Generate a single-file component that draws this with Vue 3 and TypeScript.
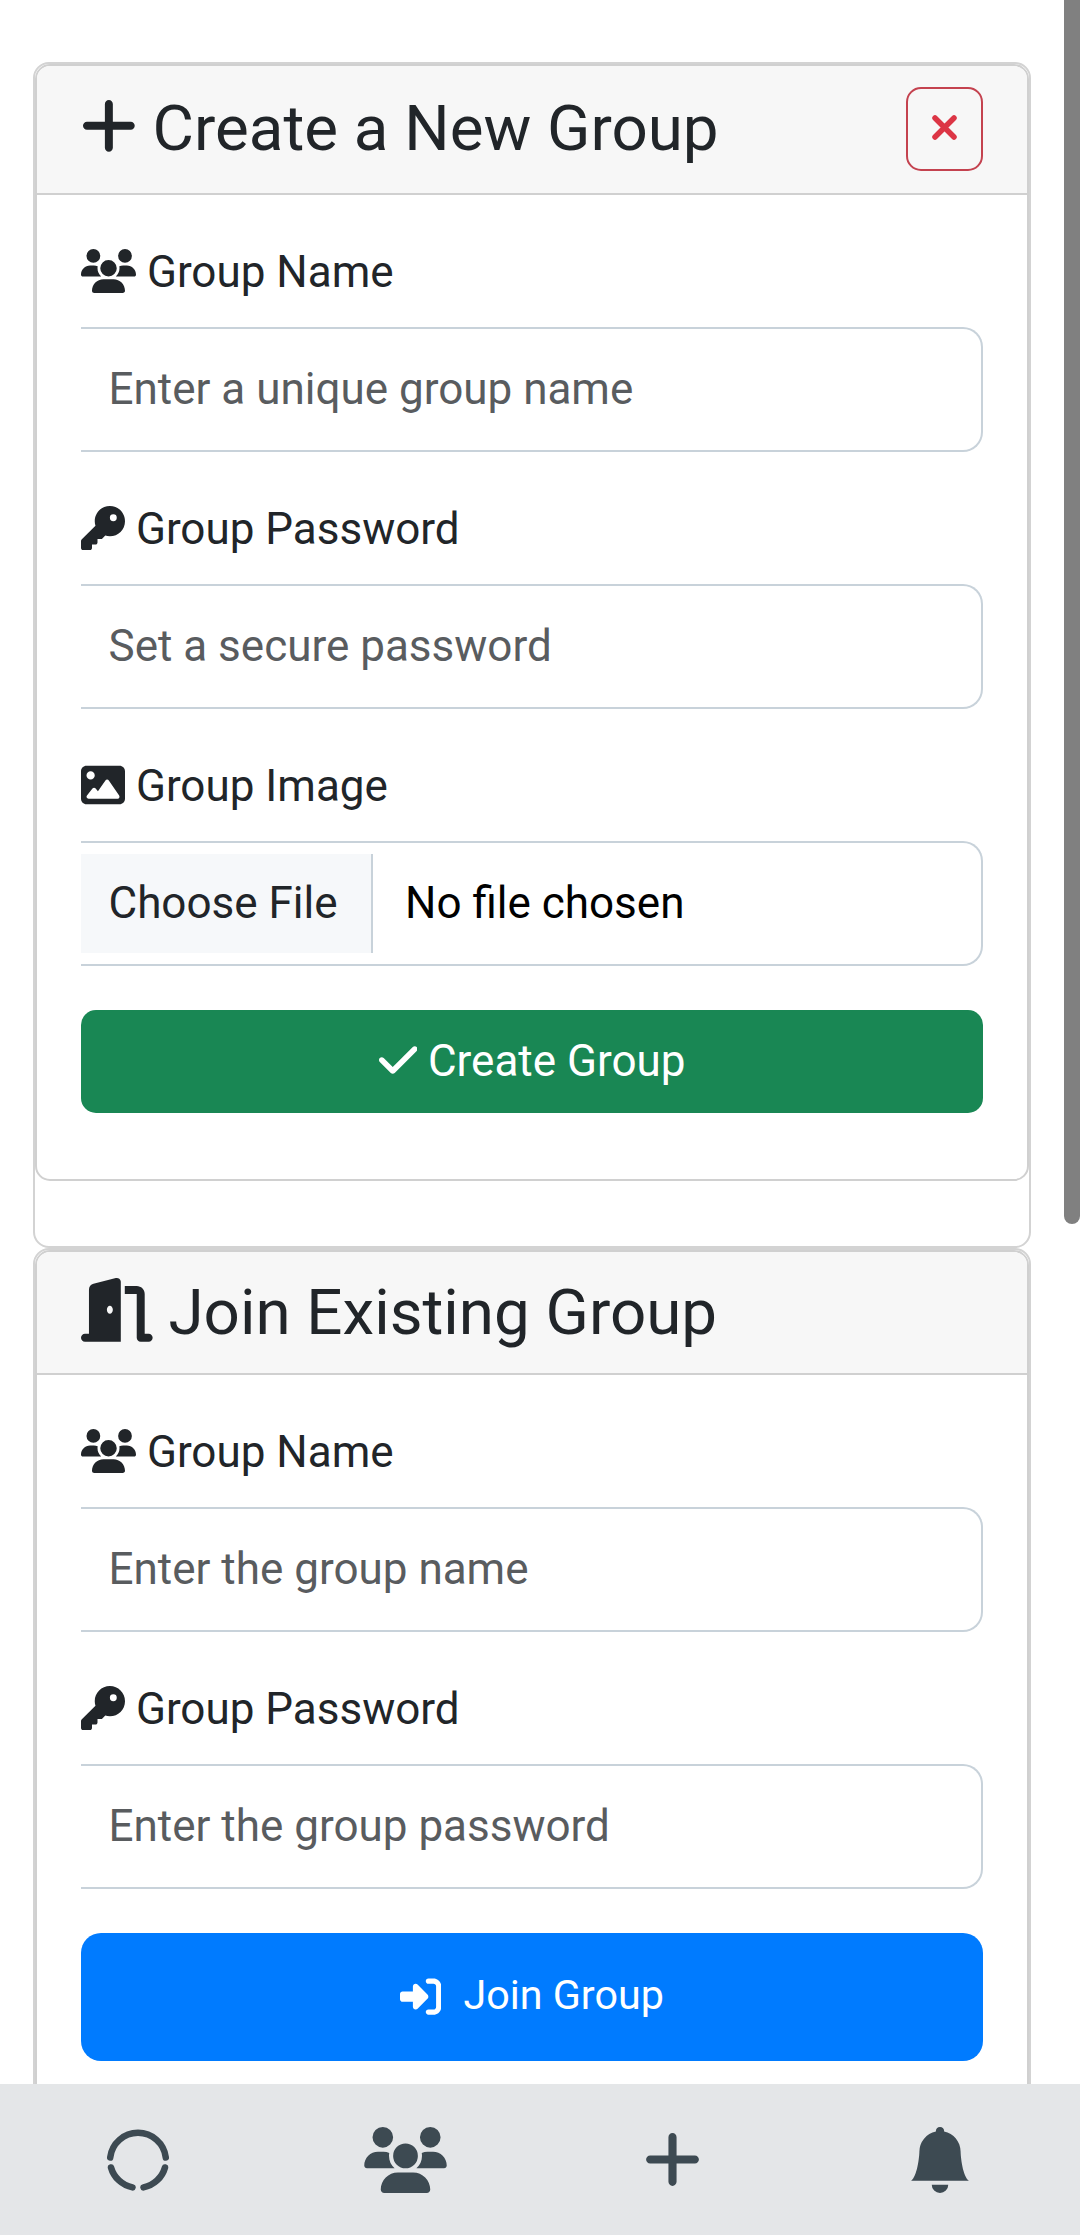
<script setup lang="ts">
const users = "M144 0a80 80 0 1 1 0 160A80 80 0 1 1 144 0zM512 0a80 80 0 1 1 0 160A80 80 0 1 1 512 0zM0 298.7C0 239.8 47.8 192 106.7 192h42.7c15.9 0 31 3.5 44.6 9.7c-1.3 7.2-1.9 14.7-1.9 22.3c0 38.2 16.8 72.5 43.3 96c-.2 0-.4 0-.7 0H21.3C9.6 320 0 310.4 0 298.7zM405.3 320c-.2 0-.4 0-.7 0c26.6-23.5 43.3-57.8 43.3-96c0-7.6-.7-15-1.9-22.3c13.6-6.3 28.7-9.7 44.6-9.7h42.7C592.2 192 640 239.8 640 298.7c0 11.8-9.6 21.3-21.3 21.3H405.3zM224 224a96 96 0 1 1 192 0 96 96 0 1 1 -192 0zM128 485.3C128 411.7 187.7 352 261.3 352H378.7C452.3 352 512 411.7 512 485.3c0 14.7-11.9 26.7-26.7 26.7H154.7c-14.7 0-26.7-11.9-26.7-26.7z"
const key = "M336 352c97.2 0 176-78.8 176-176S433.2 0 336 0S160 78.8 160 176c0 18.7 2.9 36.8 8.3 53.7L7 391c-4.5 4.5-7 10.6-7 17v80c0 13.3 10.7 24 24 24h80c13.3 0 24-10.7 24-24V448h40c13.3 0 24-10.7 24-24V384h40c6.4 0 12.5-2.5 17-7l33.3-33.3c16.9 5.4 35 8.3 53.7 8.3zM376 96a40 40 0 1 1 0 80 40 40 0 1 1 0-80z"
const image = "M0 96C0 60.7 28.7 32 64 32H448c35.3 0 64 28.7 64 64V416c0 35.3-28.7 64-64 64H64c-35.3 0-64-28.7-64-64V96zM323.8 202.5c-4.5-6.6-11.9-10.5-19.8-10.5s-15.4 3.9-19.8 10.5l-87 127.6L170.7 297c-4.6-5.7-11.5-9-18.7-9s-14.2 3.3-18.7 9l-64 80c-5.8 7.2-6.9 17.1-2.9 25.4s12.4 13.6 21.6 13.6h96 32H424c8.9 0 17.1-4.9 21.2-12.8s3.6-17.4-1.4-24.7l-120-176zM112 192a48 48 0 1 0 0-96 48 48 0 1 0 0 96z"
const check = "M438.6 105.4c12.5 12.5 12.5 32.8 0 45.3l-256 256c-12.5 12.5-32.8 12.5-45.3 0l-128-128c-12.5-12.5-12.5-32.8 0-45.3s32.8-12.5 45.3 0L160 338.7 393.4 105.4c12.5-12.5 32.8-12.5 45.3 0z"
const door = "M320 32c0-9.9-4.5-19.2-12.3-25.2S289.8-1.4 280.2 1l-179.9 45C79 51.3 64 70.5 64 92.5V448H32c-17.7 0-32 14.3-32 32s14.3 32 32 32H96 288h32V480 32zM256 256c0 17.7-10.7 32-24 32s-24-14.3-24-32s10.7-32 24-32s24 14.3 24 32zm96-128h96V480c0 17.7 14.3 32 32 32h64c17.7 0 32-14.3 32-32s-14.3-32-32-32H512V128c0-35.3-28.7-64-64-64H352v64z"
const signIn = "M217.9 105.9L340.7 228.7c7.2 7.2 11.3 17.1 11.3 27.3s-4.1 20.1-11.3 27.3L217.9 406.1c-6.4 6.4-15 9.9-24 9.9c-18.7 0-33.9-15.2-33.9-33.9l0-62.1L32 320c-17.7 0-32-14.3-32-32l0-64c0-17.7 14.3-32 32-32l128 0 0-62.1c0-18.7 15.2-33.9 33.9-33.9c9 0 17.6 3.6 24 9.9zM352 416l64 0c17.7 0 32-14.3 32-32l0-256c0-17.7-14.3-32-32-32l-64 0c-17.7 0-32-14.3-32-32s14.3-32 32-32l64 0c53 0 96 43 96 96l0 256c0 53-43 96-96 96l-64 0c-17.7 0-32-14.3-32-32s14.3-32 32-32z"
const plus = "M256 80c0-17.7-14.3-32-32-32s-32 14.3-32 32V224H48c-17.7 0-32 14.3-32 32s14.3 32 32 32H192V432c0 17.7 14.3 32 32 32s32-14.3 32-32V288H400c17.7 0 32-14.3 32-32s-14.3-32-32-32H256V80z"
const bell = "M8 16a2 2 0 0 0 2-2H6a2 2 0 0 0 2 2m.995-14.901a1 1 0 1 0-1.99 0A5 5 0 0 0 3 6c0 1.098-.5 6-2 7h14c-1.5-1-2-5.902-2-7 0-2.42-1.72-4.44-4.005-4.901"
</script>

<template>
  <div class="page">
    <section class="outer">
      <div class="inner">
        <header class="head">
          <h3 class="title raised">
            <svg class="ico w448" viewBox="0 0 448 512"><path :d="plus" /></svg> Create a New Group
          </h3>
          <button class="close" type="button" aria-label="Close">
            <svg class="close-x" viewBox="0 0 25 25"><path d="M3 3 22 22M22 3 3 22" /></svg>
          </button>
        </header>
        <form class="body body-first" @submit.prevent>
          <div class="group">
            <label class="label"><svg class="ico w640" viewBox="0 0 640 512"><path :d="users" /></svg> Group Name</label>
            <input class="field" type="text" placeholder="Enter a unique group name" />
          </div>
          <div class="group">
            <label class="label"><svg class="ico w512" viewBox="0 0 512 512"><path :d="key" /></svg> Group Password</label>
            <input class="field" type="text" placeholder="Set a secure password" />
          </div>
          <div class="group">
            <label class="label"><svg class="ico w512" viewBox="0 0 512 512"><path :d="image" /></svg> Group Image</label>
            <div class="file">
              <span class="file-btn">Choose File</span>
              <span class="file-name">No file chosen</span>
            </div>
          </div>
          <button class="btn-create" type="button">
            <svg class="ico w448" viewBox="0 0 448 512"><path :d="check" /></svg> Create Group
          </button>
        </form>
      </div>
    </section>

    <section class="outer outer-second">
      <div class="inner">
        <header class="head">
          <h3 class="title">
            <svg class="ico w576" viewBox="0 0 576 512"><path :d="door" /></svg> Join Existing Group
          </h3>
        </header>
        <form class="body" @submit.prevent>
          <div class="group">
            <label class="label"><svg class="ico w640" viewBox="0 0 640 512"><path :d="users" /></svg> Group Name</label>
            <input class="field" type="text" placeholder="Enter the group name" />
          </div>
          <div class="group">
            <label class="label"><svg class="ico w512" viewBox="0 0 512 512"><path :d="key" /></svg> Group Password</label>
            <input class="field" type="text" placeholder="Enter the group password" />
          </div>
          <button class="btn-join" type="button">
            <svg class="join-ico" viewBox="0 0 512 512"><path :d="signIn" /></svg>
            <span class="join-text">Join Group</span>
          </button>
        </form>
      </div>
    </section>

    <div class="scrollbar"></div>

    <nav class="nav">
      <a class="nav-item">
        <svg class="spin" viewBox="-31 -31 62 62">
          <path d="M-27.8 -2.5A28 28 0 0 1 27.8 -2.5M-27 7.5A28 28 0 0 0 -5.5 27.4M27 7.5A28 28 0 0 1 5.5 27.4" />
        </svg>
      </a>
      <a class="nav-item"><svg class="nav-users" viewBox="0 0 640 512"><path :d="users" /></svg></a>
      <a class="nav-item"><svg class="nav-plus" viewBox="0 0 448 512"><path :d="plus" /></svg></a>
      <a class="nav-item"><svg class="nav-bell" viewBox="0 0 16 16"><path :d="bell" /></svg></a>
    </nav>
  </div>
</template>

<style>
html, body { margin: 0; background: #fff; overflow: hidden; }
</style>

<style scoped>
.page {
  position: relative;
  width: 1080px;
  height: 2235px;
  overflow: hidden;
  box-sizing: border-box;
  padding: 62px 49px 0 33px;
  background: #fff;
  font-family: Roboto, "Liberation Sans", sans-serif;
  color: #212529;
  font-size: 44px;
  line-height: 66px;
}
svg { fill: currentColor; display: inline-block; }
.ico { height: 1em; vertical-align: -0.125em; }
.w448 { width: 0.875em; }
.w512 { width: 1em; }
.w576 { width: 1.125em; }
.w640 { width: 1.25em; }

.outer {
  border: 2px solid #d3d3d3;
  border-radius: 16px;
  padding-bottom: 65px;
}
.outer-second { padding-bottom: 0; }
.inner {
  border: 2px solid #d0d0d0;
  border-radius: 15px;
  overflow: hidden;
  background: #fff;
}
.head {
  display: flex;
  align-items: center;
  justify-content: space-between;
  padding: 22px 37px 22px 44px;
  background: #f7f7f7;
  border-bottom: 2px solid #d0d0d0;
}
.title {
  margin: 0;
  font-size: 63.7px;
  line-height: 77px;
  font-weight: 400;
}
.raised { margin-bottom: 3px; }
.close {
  width: 77px;
  height: 84px;
  margin: -1px 7px 0 0;
  padding: 0 0 3px;
  display: flex;
  align-items: center;
  justify-content: center;
  background: transparent;
  border: 2px solid #c4424f;
  border-radius: 15px;
  box-sizing: border-box;
}
.close-x { width: 25px; height: 25px; fill: none; stroke: #dc3545; stroke-width: 5.5; stroke-linecap: round; }
.body { padding: 44px 44px 44px; }
.body-first { padding-bottom: 66px; }
.group { margin-bottom: 44px; }
.label { display: block; margin-bottom: 22px; }
.field {
  display: block;
  width: 100%;
  height: 125px;
  box-sizing: border-box;
  padding: 0 24px 2px 27.5px;
  border: 2px solid #c8d2da;
  border-left: 0;
  border-radius: 0 20px 20px 0;
  background: #fff;
  color: #212529;
  font: inherit;
  outline: none;
}
.field::placeholder { color: #595c5f; opacity: 1; }
.file {
  display: flex;
  align-items: center;
  height: 125px;
  box-sizing: border-box;
  border: 2px solid #c8d2da;
  border-left: 0;
  border-radius: 0 20px 20px 0;
}
.file-btn {
  box-sizing: border-box;
  width: 292px;
  height: 99px;
  padding: 0 0 2px 27.5px;
  display: flex;
  align-items: center;
  background: #f6f8fa;
  border-right: 2px solid #c8d2da;
  color: #212529;
}
.file-name { margin: 0 0 2px 32px; color: #000; }
.btn-create {
  display: block;
  width: 100%;
  height: 103px;
  padding: 0 0 1px;
  border: 0;
  border-radius: 15px;
  background: #198754;
  color: #fff;
  font: inherit;
}
.btn-join {
  display: flex;
  align-items: center;
  justify-content: center;
  width: 100%;
  height: 128px;
  padding: 0;
  border: 0;
  border-radius: 20px;
  background: #007bff;
  color: #fff;
  font-family: inherit;
  font-size: 41.25px;
  line-height: 62px;
}
.join-ico { width: 41.25px; height: 41.25px; margin-right: 22px; }
.join-text { margin-bottom: 4px; }

.scrollbar {
  position: absolute;
  top: 0;
  right: 0;
  width: 16px;
  height: 1224px;
  background: #808080;
  border-radius: 0 0 8px 8px;
}
.nav {
  position: absolute;
  left: 0;
  right: 0;
  bottom: 0;
  height: 151px;
  padding-left: 4.5px;
  display: grid;
  grid-template-columns: repeat(4, 267.3px);
  align-items: center;
  justify-items: center;
  background: #e4e6e8;
  color: #3d4a52;
}
.nav-item { display: flex; align-items: center; justify-content: center; }
.spin { width: 62px; height: 62px; fill: none; stroke: currentColor; stroke-width: 6.5; stroke-linecap: round; }
.nav-users { width: 83px; height: 66px; }
.nav-plus { width: 57px; height: 65px; }
.nav-bell { width: 66px; height: 66px; }
</style>
